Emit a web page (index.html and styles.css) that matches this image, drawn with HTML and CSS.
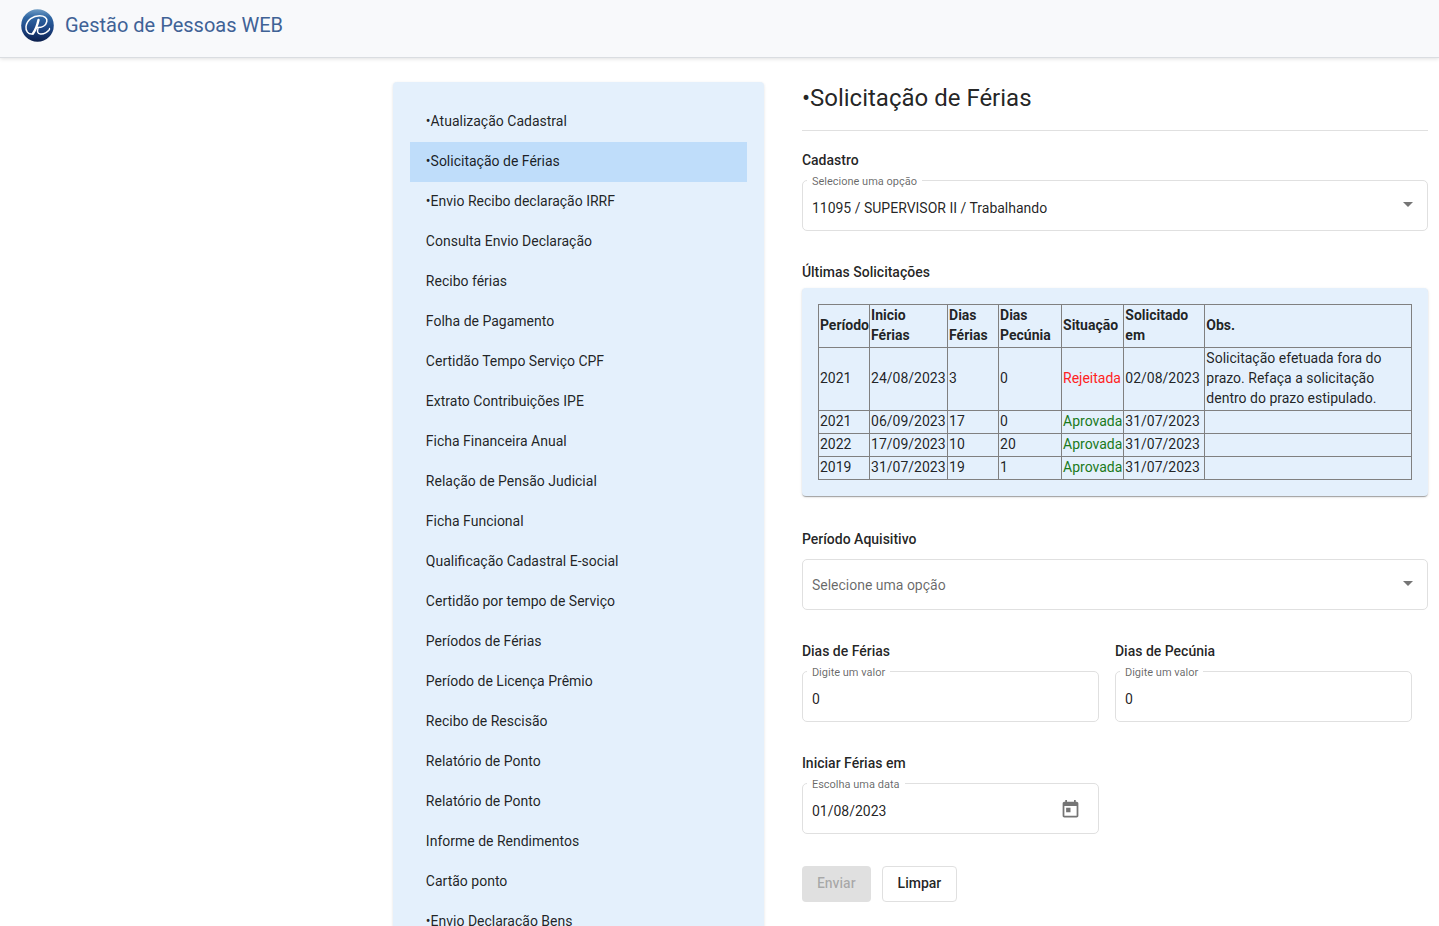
FILE: index.html
```html
<!DOCTYPE html>
<html lang="pt-BR">
<head>
<meta charset="utf-8">
<meta name="viewport" content="width=device-width, initial-scale=1">
<title>Gestão de Pessoas WEB</title>
<link rel="stylesheet" href="styles.css">
</head>
<body>
<header class="topbar">
  <svg class="logo" viewBox="0 0 33 33" aria-hidden="true">
    <defs>
      <linearGradient id="ball" x1="0" y1="0" x2="0" y2="1">
        <stop offset="0" stop-color="#6f9cc4"/>
        <stop offset=".25" stop-color="#2f66a3"/>
        <stop offset=".6" stop-color="#1d4685"/>
        <stop offset="1" stop-color="#0c1f4c"/>
      </linearGradient>
    </defs>
    <circle cx="16.5" cy="16.5" r="16.3" fill="url(#ball)"/>
    <g fill="none" stroke="#fff" stroke-linecap="round">
      <path stroke-width="1.5" d="M11.500 25C7 25.500 4.500 22 5 17.500C6 11 12 6.800 18.500 6.800C23.500 6.800 26.500 9 25.800 12.500C25 16.500 21 18.800 16 18.600"/>
      <path stroke-width="2.4" d="M17.500 11C16.500 15.500 14.500 21 12 24.500"/>
      <path stroke-width="1.4" d="M17 19.500C16 22.500 16.500 24.800 19.500 25C23 25.200 26.500 23 28.500 20.500"/>
      <circle cx="28.500" cy="19.500" r=".7" fill="#fff" stroke="none"/>
    </g>
  </svg>
  <span class="brand">Gestão de Pessoas WEB</span>
</header>
<div class="layout">
  <nav class="menu" aria-label="Menu">
    <a href="#">•Atualização Cadastral</a>
    <a href="#" class="active" aria-current="page">•Solicitação de Férias</a>
    <a href="#">•Envio Recibo declaração IRRF</a>
    <a href="#">Consulta Envio Declaração</a>
    <a href="#">Recibo férias</a>
    <a href="#">Folha de Pagamento</a>
    <a href="#">Certidão Tempo Serviço CPF</a>
    <a href="#">Extrato Contribuições IPE</a>
    <a href="#">Ficha Financeira Anual</a>
    <a href="#">Relação de Pensão Judicial</a>
    <a href="#">Ficha Funcional</a>
    <a href="#">Qualificação Cadastral E-social</a>
    <a href="#">Certidão por tempo de Serviço</a>
    <a href="#">Períodos de Férias</a>
    <a href="#">Período de Licença Prêmio</a>
    <a href="#">Recibo de Rescisão</a>
    <a href="#">Relatório de Ponto</a>
    <a href="#">Relatório de Ponto</a>
    <a href="#">Informe de Rendimentos</a>
    <a href="#">Cartão ponto</a>
    <a href="#">•Envio Declaração Bens</a>
  </nav>
  <main class="content">
    <h1>•Solicitação de Férias</h1>
    <form class="form">
      <section class="group">
        <h2>Cadastro</h2>
        <div class="field floated">
          <label for="cadastro">Selecione uma opção</label>
          <select id="cadastro"><option>11095 / SUPERVISOR II / Trabalhando</option></select>
          <svg class="arrow" viewBox="0 0 10 5" aria-hidden="true"><path d="M0 0h10L5 5z"/></svg>
        </div>
      </section>
      <section class="group history">
        <h2>Últimas Solicitações</h2>
        <div class="card">
          <table>
            <colgroup>
              <col class="c-period"><col class="c-start"><col class="c-days"><col class="c-cash"><col class="c-status"><col class="c-asked"><col>
            </colgroup>
            <thead>
              <tr><th>Período</th><th>Inicio Férias</th><th>Dias Férias</th><th>Dias Pecúnia</th><th>Situação</th><th>Solicitado em</th><th>Obs.</th></tr>
            </thead>
            <tbody>
              <tr><td>2021</td><td>24/08/2023</td><td>3</td><td>0</td><td class="rejected">Rejeitada</td><td>02/08/2023</td><td>Solicitação efetuada fora do prazo. Refaça a solicitação dentro do prazo estipulado.</td></tr>
              <tr><td>2021</td><td>06/09/2023</td><td>17</td><td>0</td><td class="approved">Aprovada</td><td>31/07/2023</td><td></td></tr>
              <tr><td>2022</td><td>17/09/2023</td><td>10</td><td>20</td><td class="approved">Aprovada</td><td>31/07/2023</td><td></td></tr>
              <tr><td>2019</td><td>31/07/2023</td><td>19</td><td>1</td><td class="approved">Aprovada</td><td>31/07/2023</td><td></td></tr>
            </tbody>
          </table>
        </div>
      </section>
      <section class="group">
        <h2 id="aquisitivo-title">Período Aquisitivo</h2>
        <div class="field empty">
          <select id="aquisitivo" aria-labelledby="aquisitivo-title"><option>Selecione uma opção</option></select>
          <svg class="arrow" viewBox="0 0 10 5" aria-hidden="true"><path d="M0 0h10L5 5z"/></svg>
        </div>
      </section>
      <div class="pair">
        <section class="group">
          <h2>Dias de Férias</h2>
          <div class="field floated">
            <label for="dias">Digite um valor</label>
            <input id="dias" type="text" inputmode="numeric" value="0">
          </div>
        </section>
        <section class="group">
          <h2>Dias de Pecúnia</h2>
          <div class="field floated">
            <label for="pecunia">Digite um valor</label>
            <input id="pecunia" type="text" inputmode="numeric" value="0">
          </div>
        </section>
        <section class="group">
          <h2>Iniciar Férias em</h2>
          <div class="field floated">
            <label for="inicio">Escolha uma data</label>
            <input id="inicio" type="text" value="01/08/2023">
            <button class="calendar" type="button" aria-label="Abrir calendário">
              <svg viewBox="0 0 24 24" aria-hidden="true"><path d="M19 3h-1V1h-2v2H8V1H6v2H5c-1.110 0-1.990.900-1.990 2L3 19c0 1.100.890 2 2 2h14c1.100 0 2-.900 2-2V5c0-1.100-.900-2-2-2zm0 16H5V8h14v11zM7 10h5v5H7z"/></svg>
            </button>
          </div>
        </section>
      </div>
      <div class="actions">
        <button class="btn send" type="submit" disabled>Enviar</button>
        <button class="btn clear" type="reset">Limpar</button>
      </div>
    </form>
  </main>
</div>
</body>
</html>
```
FILE: styles.css
```css
* {
  box-sizing: border-box;
}

body {
  margin: 0;
  height: 100vh;
  display: flex;
  flex-direction: column;
  background: #fff;
  color: rgba(0, 0, 0, 0.87);
  font: 400 14px/20px Roboto, "Liberation Sans", sans-serif;
}

.topbar {
  flex: none;
  display: flex;
  align-items: center;
  gap: 11px;
  padding: 9px 21px 15px;
  background: #f8f9fb;
  border-bottom: 1px solid #dadde1;
  box-shadow: 0 1px 4px rgba(0, 0, 0, 0.12);
}

.logo {
  width: 33px;
  height: 33px;
}

.brand {
  padding-bottom: 2px;
  color: #3f6296;
  font-size: 20px;
  line-height: 24px;
}

.layout {
  flex: 1;
  min-height: 0;
  overflow-y: auto;
  scrollbar-width: none;
  display: grid;
  grid-template-columns: 371fr 664fr;
  align-items: start;
  padding: 24px 11px 24px 27.3%;
}

.menu {
  display: flex;
  flex-direction: column;
  padding: 20px 17px;
  border-radius: 4px;
  background: #e4f0fc;
  box-shadow: 0 1px 3px rgba(0, 0, 0, 0.12);
}

.menu a {
  padding: 9px 16px 11px;
  color: inherit;
  text-decoration: none;
}

.menu .active {
  background: #bfddfa;
}

.content {
  padding-left: 38px;
}

h1 {
  margin: 0 0 19px;
  padding-bottom: 16px;
  border-bottom: 1px solid #e0e0e0;
  font-size: 24px;
  font-weight: 400;
  line-height: 32px;
}

.form {
  display: flex;
  flex-direction: column;
  gap: 31px;
}

.group {
  display: flex;
  flex-direction: column;
  gap: 10px;
}

.history {
  gap: 6px;
  margin-bottom: 2px;
}

h2 {
  margin: 0;
  font-size: 14px;
  font-weight: 500;
  line-height: 20px;
}

.field {
  position: relative;
  display: flex;
  height: 51px;
  border: 1px solid #e0e0e0;
  border-radius: 5px;
}

.field label {
  position: absolute;
  top: -8px;
  left: 4px;
  padding: 0 5px;
  background: #fff;
  color: rgba(0, 0, 0, 0.6);
  font-size: 11px;
  line-height: 18px;
}

.field select,
.field input {
  flex: 1;
  min-width: 0;
  margin: 0;
  padding: 0 9px;
  border: 0;
  border-radius: 5px;
  background: transparent;
  color: inherit;
  font: inherit;
  appearance: none;
}

.floated select,
.floated input {
  padding-top: 5px;
}

.field.empty select {
  color: rgba(0, 0, 0, 0.6);
}

.arrow {
  position: absolute;
  top: 21px;
  right: 14px;
  width: 10px;
  height: 5px;
  fill: #757575;
  pointer-events: none;
}

.calendar {
  display: flex;
  align-items: center;
  padding: 1px 17px 0;
  border: 0;
  background: none;
}

.calendar svg {
  width: 21px;
  height: 21px;
  fill: #757575;
}

.card {
  padding: 16px;
  border-radius: 4px;
  background: #e4f0fc;
  box-shadow: 0 2px 1px -1px rgba(0, 0, 0, 0.2), 0 1px 1px rgba(0, 0, 0, 0.14), 0 1px 3px rgba(0, 0, 0, 0.12);
}

table {
  width: 100%;
  border-collapse: collapse;
}

th,
td {
  padding: 0 1px 2px;
  border: 1px solid #808080;
  text-align: left;
}

th:first-child {
  padding-right: 0;
}

.c-period,
.c-days {
  width: 51px;
}

.c-start {
  width: 78px;
}

.c-cash {
  width: 63px;
}

.c-status {
  width: 62px;
}

.c-asked {
  width: 81px;
}

.rejected {
  color: #f22;
}

.approved {
  color: #1b7a1b;
}

.pair {
  display: grid;
  grid-template-columns: 1fr 1fr;
  gap: 31px 16px;
  padding-right: 16px;
}

.actions {
  display: flex;
  gap: 11px;
  padding-top: 1px;
}

.btn {
  height: 36px;
  padding: 0 14px 2px;
  border: 1px solid #e0e0e0;
  border-radius: 4px;
  background: #fff;
  color: inherit;
  font: inherit;
  font-weight: 500;
}

.send {
  padding: 0 15px 2px;
  border: 0;
  background: #e0e0e0;
  color: rgba(0, 0, 0, 0.26);
}

.clear {
  padding: 0 15px 2px;
}
```
